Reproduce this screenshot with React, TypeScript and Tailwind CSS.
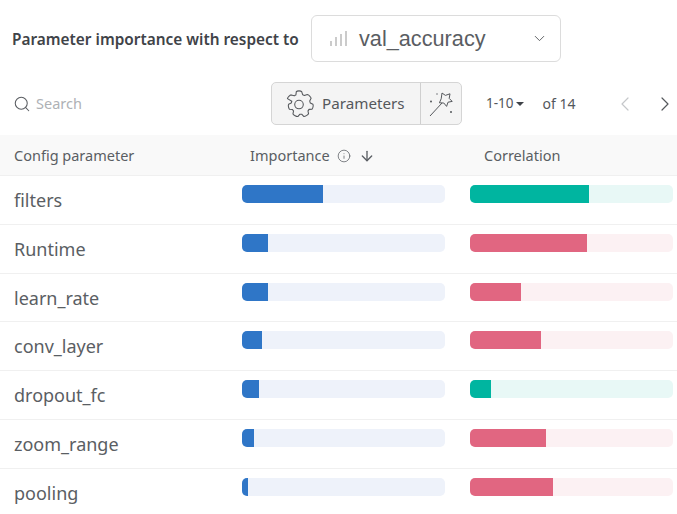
import { ChevronDown, ChevronLeft, ChevronRight, Search, ArrowDown, Info } from "lucide-react";

interface Row {
  name: string;
  importance: number;
  correlation: number;
  positive: boolean;
}

const rows: Row[] = [
  { name: "filters", importance: 81, correlation: 119, positive: true },
  { name: "Runtime", importance: 26, correlation: 117, positive: false },
  { name: "learn_rate", importance: 26, correlation: 51, positive: false },
  { name: "conv_layer", importance: 20, correlation: 71, positive: false },
  { name: "dropout_fc", importance: 17, correlation: 21, positive: true },
  { name: "zoom_range", importance: 12, correlation: 76, positive: false },
  { name: "pooling", importance: 6, correlation: 83, positive: false },
];

function Bar({ width, track, fill }: { width: number; track: string; fill: string }) {
  return (
    <div className={`h-[18px] w-[203px] overflow-hidden rounded-[5px] ${track}`}>
      <div className={`h-full ${fill}`} style={{ width }} />
    </div>
  );
}

function GearIcon() {
  return (
    <svg width="30" height="30" viewBox="0 0 28 28" fill="none" stroke="#55585c" strokeWidth="1" strokeLinejoin="round">
      <path d="M11.5 2.5c.8-1 4.200-1 5 0l.9 2.800c.6.200 1.100.500 1.600.800l2.800-.9c1.200.100 3.400 2.300 3.500 3.500l-1.300 2.600c.2.500.4 1.100.5 1.700l2.500 1.200c.6 1-.0 3.800-.8 4.600l-2.800.2c-.3.500-.6 1-1 1.400l.5 2.800c-.5 1-3.300 2.600-4.500 2.400l-1.900-2.100c-.6.100-1.200.1-1.800.1l-1.800 2.100c-1.200.2-4-1.400-4.500-2.400l.5-2.800c-.4-.4-.7-.9-1-1.400l-2.800-.2c-.8-.8-1.400-3.600-.8-4.600l2.500-1.200c.1-.6.300-1.200.5-1.700L3.200 9c.1-1.200 2.300-3.400 3.500-3.500l2.800.9c.5-.3 1-.6 1.600-.8z" />
      <circle cx="14" cy="14.500" r="4" />
    </svg>
  );
}

function WandIcon() {
  return (
    <svg width="28" height="28" viewBox="0 0 28 28" fill="none" stroke="#55585c" strokeWidth="1" strokeLinejoin="round">
      <path d="M3 26l12-13" />
      <path d="M15 3l3.400 2.400 4.600-1.600-.8 4.600 3 3-4.200.8-1.400 4.200-2.800-3.400-4.400-.2 1.800-4z" />
      <circle cx="4" cy="11.500" r="1" fill="#55585c" stroke="none" />
      <circle cx="10" cy="4" r=".7" fill="#55585c" stroke="none" />
      <circle cx="24" cy="22" r="1" fill="#55585c" stroke="none" />
    </svg>
  );
}

export default function App() {
  return (
    <main className="h-[514px] w-[677px] overflow-hidden bg-white font-['Noto_Sans',sans-serif] text-[#5a5e63]">
      <div className="flex h-[82px] items-start pl-3 pt-[15px]">
        <h1 className="mt-[14px] w-[299px] whitespace-nowrap text-[15.4px] font-semibold leading-[22px] text-[#3f4348]">
          Parameter importance with respect to
        </h1>
        <div className="flex h-[47px] w-[250px] items-center rounded-[6px] border border-[#dcdcdc] pl-[17px] pr-[12px]">
          <svg width="18" height="18" viewBox="0 0 18 18" stroke="#b0b0b0" strokeWidth="1.3" className="mr-3">
            <path d="M2 16v-5M7 16V7M12 16V4M17 16V1" />
          </svg>
          <span className="mt-[1px] flex-1 font-['Liberation_Sans',sans-serif] text-[21.7px] text-[#5a5d62]">val_accuracy</span>
          <ChevronDown size={17} strokeWidth={1.3} className="text-[#55585c]" />
        </div>
      </div>

      <div className="flex h-[53px] items-start">
        <div className="flex w-[271px] shrink-0 items-center pl-[13px] pt-[11px]">
          <Search size={18} strokeWidth={1.4} className="text-[#5a5d62]" />
          <span className="ml-[5px] text-[14.500px] text-[#aeb1b5]">Search</span>
        </div>
        <div className="flex h-[43px] w-[191px] shrink-0 items-center rounded-[5px] border border-[#d5d5d5] bg-[#f4f4f4]">
          <div className="flex h-full w-[149px] items-center border-r border-[#cfcfcf] pl-[12px]">
            <GearIcon />
            <span className="ml-[8px] text-[15.2px] text-[#55585c]">Parameters</span>
          </div>
          <div className="flex flex-1 items-center justify-center">
            <WandIcon />
          </div>
        </div>
        <div className="ml-[24px] flex h-[43px] items-center whitespace-nowrap text-[13.500px] text-[#53575c]">
          <span>1-10</span>
          <span className="ml-[2px] mt-[1px] h-0 w-0 shrink-0 border-x-[4px] border-t-[4px] border-x-transparent border-t-[#3f4348]" />
          <span className="ml-[19px] w-[33px] shrink-0 text-[14px]">of 14</span>
          <ChevronLeft size={24} strokeWidth={1.2} className="ml-[37px] shrink-0 text-[#c5c7ca]" />
          <ChevronRight size={24} strokeWidth={1.2} className="ml-[16px] shrink-0 text-[#55585c]" />
        </div>
      </div>

      <div className="flex h-[41px] items-center border-b border-[#f0f0f0] bg-[#f9f9f9] pt-[1px] text-[14.500px]">
        <span className="w-[250px] pl-[14px]">Config parameter</span>
        <div className="flex w-[234px] items-center">
          <span>Importance</span>
          <Info size={14} strokeWidth={1.3} className="ml-[7px]" />
          <ArrowDown size={16} strokeWidth={2} className="ml-[8px]" />
        </div>
        <span>Correlation</span>
      </div>

      {rows.map((row) => (
        <div key={row.name} className="flex h-[48.8px] items-start border-b border-[#f0f0f0]">
          <span className="mt-[11px] w-[242px] pl-[14px] text-[18px] leading-[26px]">{row.name}</span>
          <div className="mt-[9px]">
            <Bar width={row.importance} track="bg-[#eef2fa]" fill="bg-[#2f76c7]" />
          </div>
          <div className="ml-[25px] mt-[9px]">
            <Bar
              width={row.correlation}
              track={row.positive ? "bg-[#e8f8f6]" : "bg-[#fcf1f3]"}
              fill={row.positive ? "bg-[#00b5a0]" : "bg-[#e16681]"}
            />
          </div>
        </div>
      ))}
    </main>
  );
}
